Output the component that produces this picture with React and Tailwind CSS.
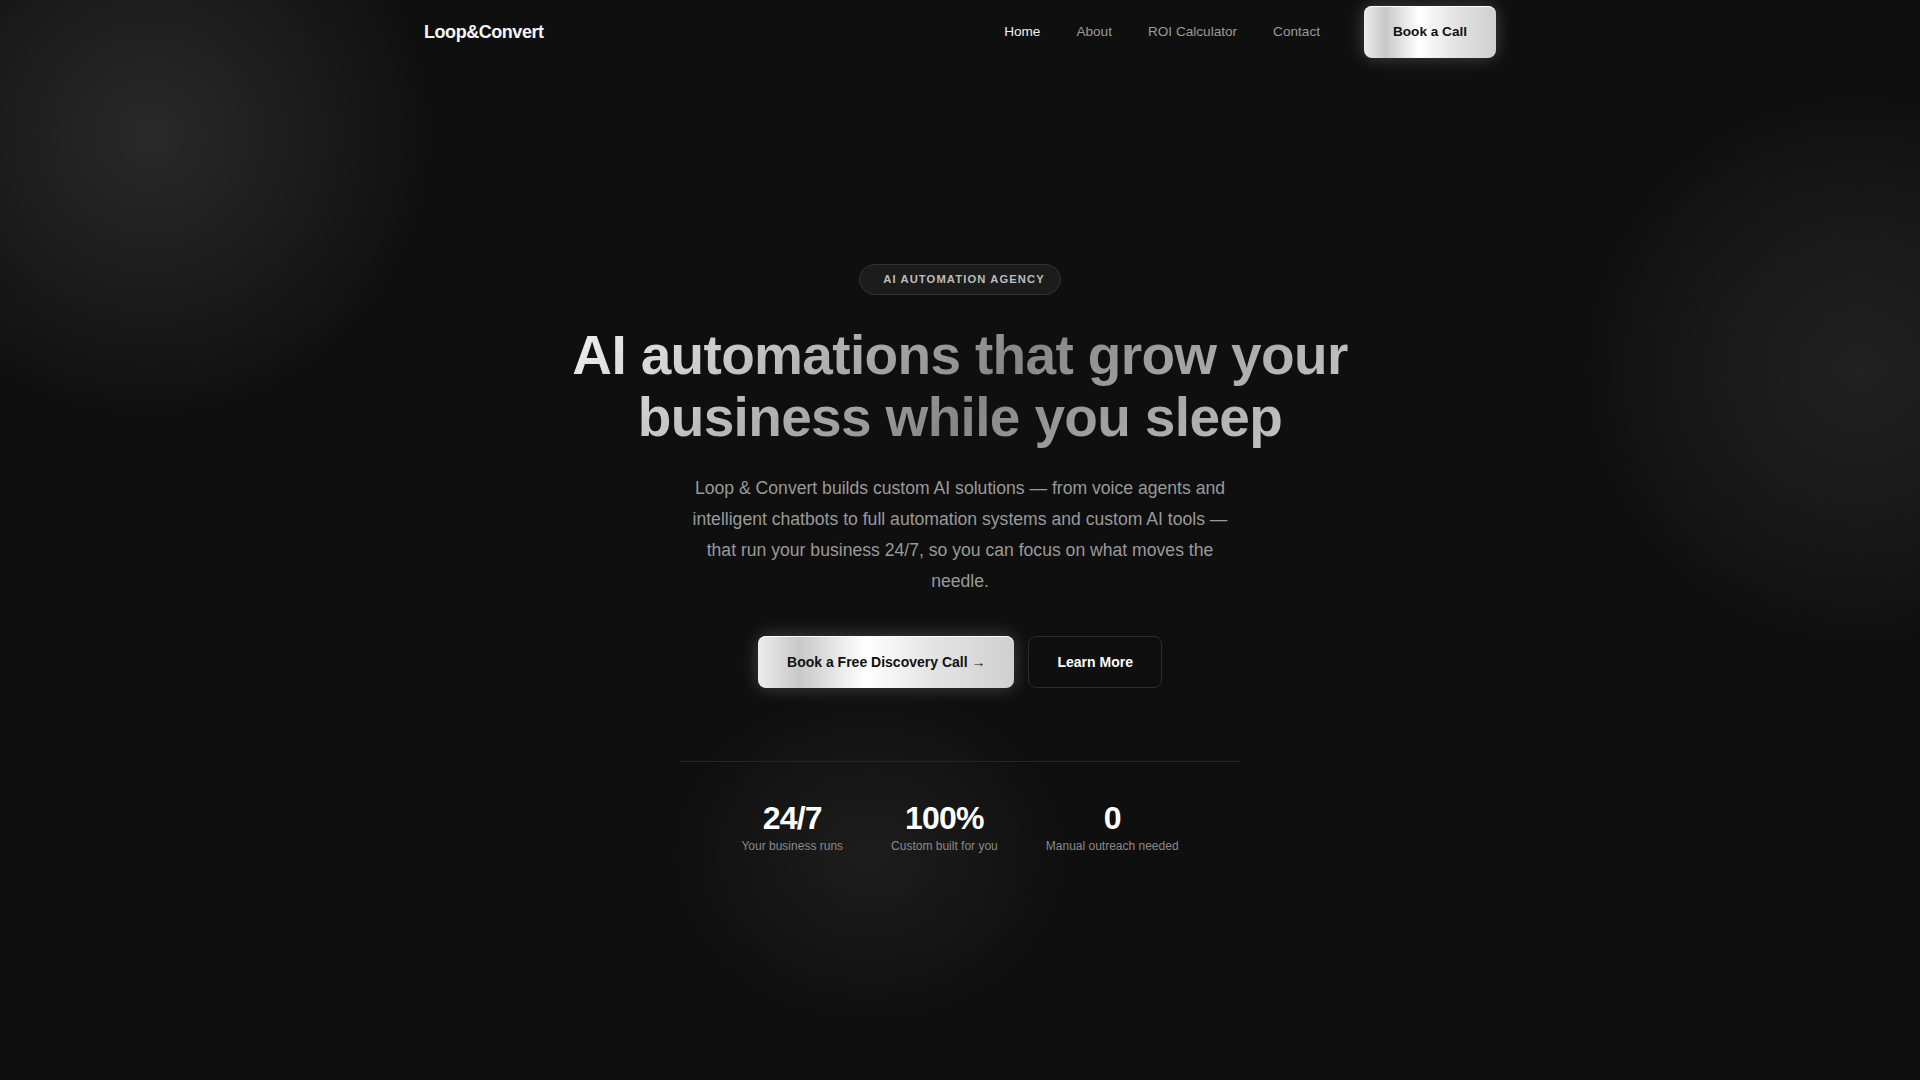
import React from 'react';

const links = ['Home', 'About', 'ROI Calculator', 'Contact'];

const stats = [
  { value: '24/7', label: 'Your business runs' },
  { value: '100%', label: 'Custom built for you' },
  { value: '0', label: 'Manual outreach needed' },
];

const chrome =
  'bg-[linear-gradient(90deg,#ececec_0%,#c8c8c8_16%,#ffffff_42%,#e4e4e4_68%,#d0d0d0_100%)] shadow-[0_0_18px_rgba(255,255,255,0.22),inset_0_1px_0_rgba(255,255,255,0.9)] text-[#111]';

const App = () => {
  return (
    <div className="relative min-h-screen overflow-hidden bg-[#0f0f0f] font-['Liberation_Sans',Arial,sans-serif] text-white">
      {/* background glows */}
      <div className="pointer-events-none absolute left-[-130px] top-[-145px] h-[560px] w-[560px] rounded-full bg-[radial-gradient(circle,rgba(255,255,255,0.11)_0%,rgba(255,255,255,0.055)_38%,rgba(255,255,255,0.012)_66%,transparent_71%)]" />
      <div className="pointer-events-none absolute left-[1590px] top-[100px] h-[540px] w-[540px] rounded-full bg-[radial-gradient(circle,rgba(255,255,255,0.075)_0%,rgba(255,255,255,0.035)_45%,rgba(255,255,255,0.008)_68%,transparent_72%)]" />
      <div className="pointer-events-none absolute left-[675px] top-[690px] h-[330px] w-[390px] rounded-full bg-[radial-gradient(ellipse,rgba(255,255,255,0.06)_0%,rgba(255,255,255,0.025)_45%,rgba(255,255,255,0.005)_68%,transparent_72%)]" />

      <header className="relative mx-auto flex h-16 max-w-6xl items-center justify-between px-10">
        <span className="text-[18px] font-bold tracking-tight text-[#f5f5f5]">Loop&amp;Convert</span>
        <nav className="flex items-center">
          <ul className="flex items-center gap-9 text-[13.6px]">
            {links.map((l, i) => (
              <li key={l} className={i === 0 ? 'text-[#f0f0f0]' : 'text-[#9a9a9a]'}>
                {l}
              </li>
            ))}
          </ul>
          <button className={`ml-11 rounded-lg px-[29px] py-4 text-[13.6px] font-bold leading-5 ${chrome}`}>
            Book a Call
          </button>
        </nav>
      </header>

      <main className="relative flex flex-col items-center pt-[200px] text-center">
        <div className="flex h-[31px] items-center rounded-full border border-[#333] bg-[#1c1c1c] pl-[23px] pr-[15px] text-[11.2px] font-bold tracking-[0.1em] text-[#bdbdbd]">
          AI AUTOMATION AGENCY
        </div>

        <h1 className="mt-[30px] w-full max-w-4xl bg-[linear-gradient(135deg,#ffffff_0%,#868686_53%,#d8d8d8_100%)] bg-clip-text text-[55px] font-bold leading-[1.12] tracking-[-0.012em] text-transparent">
          AI automations that grow your
          <br />
          business while you sleep
        </h1>

        <p className="mt-[25px] max-w-[550px] text-[17.6px] leading-[1.75] text-[#9a9a9a]">
          Loop &amp; Convert builds custom AI solutions — from voice agents and intelligent chatbots to full
          automation systems and custom AI tools — that run your business 24/7, so you can focus on what moves
          the needle.
        </p>

        <div className="mt-10 flex items-center gap-3.5">
          <button className={`rounded-lg px-[29px] py-4 text-[14px] font-bold leading-5 ${chrome}`}>
            Book a Free Discovery Call →
          </button>
          <button className="rounded-lg border border-[#2c2c2c] bg-[#0f0f0f] px-7 py-[15px] text-[14px] font-bold leading-5 text-white">
            Learn More
          </button>
        </div>

        <div className="mt-[73px] flex w-[560px] justify-center gap-12 border-t border-[#262626] pt-[40px]">
          {stats.map((s) => (
            <div key={s.label} className="flex flex-col items-center">
              <span className="text-[32px] font-bold leading-none tracking-tight text-white">{s.value}</span>
              <span className="mt-1 text-xs leading-4 text-[#8a8a8a]">{s.label}</span>
            </div>
          ))}
        </div>
      </main>
    </div>
  );
};

export default App;
